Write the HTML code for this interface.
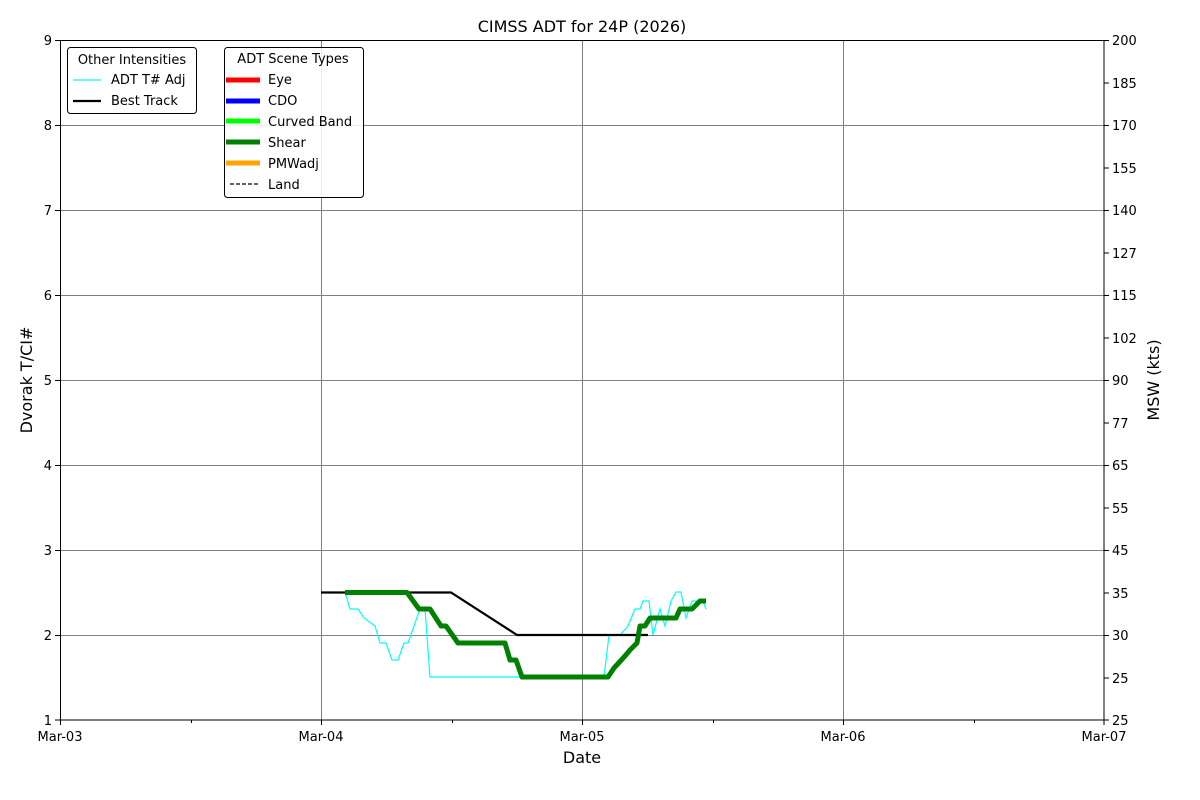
<!DOCTYPE html>
<html><head><meta charset="utf-8"><style>html,body{margin:0;padding:0;background:#fff}svg{display:block}text{font-family:"DejaVu Sans","Liberation Sans",sans-serif;fill:#000}</style></head><body>
<svg width="1200" height="800" viewBox="0 0 1200 800" xmlns="http://www.w3.org/2000/svg">
<rect width="1200" height="800" fill="#fff"/>
<g stroke="#808080" stroke-width="1">
<line x1="321.5" y1="40" x2="321.5" y2="720"/><line x1="582.5" y1="40" x2="582.5" y2="720"/><line x1="843.5" y1="40" x2="843.5" y2="720"/>
<line x1="60" y1="125.5" x2="1104" y2="125.5"/><line x1="60" y1="210.5" x2="1104" y2="210.5"/><line x1="60" y1="295.5" x2="1104" y2="295.5"/><line x1="60" y1="380.5" x2="1104" y2="380.5"/><line x1="60" y1="465.5" x2="1104" y2="465.5"/><line x1="60" y1="550.5" x2="1104" y2="550.5"/><line x1="60" y1="635.5" x2="1104" y2="635.5"/>
</g>
<polyline fill="none" stroke="#00ffff" stroke-width="1.2" points="345,592 350,609 358,609 364,618 375,626 380,643 386,643 392,660 398,660 404,643 408,643 420,609 425,609 430,677 604,677 609,635 620,635 628,626 635,609 640,609 643,601 649,601 653,635 660,609 665,626 671,601 676,592 681,592 686,618 692,601 697,601 703,601 706,609"/>
<polyline fill="none" stroke="#000" stroke-width="2.2" points="321,592.5 451,592.5 517,635 648,635"/>
<polyline fill="none" stroke="#008000" stroke-width="5" stroke-linejoin="round" points="345,592.5 407,592.5 419,609 430,609 441,626 446,626 458,643 505,643 510,660 516,660 522,677 608,677 614,668 625,656 630,650 637,643 640,626 645,626 650,618 676,618 680,609 692,609 700,601 706,601"/>
<rect x="60.5" y="40.5" width="1043.5" height="679.5" fill="none" stroke="#000" stroke-width="1"/>
<g stroke="#000" stroke-width="1">
<line x1="60.5" y1="720" x2="60.5" y2="725"/><line x1="321.5" y1="720" x2="321.5" y2="725"/><line x1="582.5" y1="720" x2="582.5" y2="725"/><line x1="843.5" y1="720" x2="843.5" y2="725"/><line x1="1104" y1="720" x2="1104" y2="725"/>
<line x1="191.5" y1="720" x2="191.5" y2="723"/><line x1="452.5" y1="720" x2="452.5" y2="723"/><line x1="713.5" y1="720" x2="713.5" y2="723"/><line x1="974.5" y1="720" x2="974.5" y2="723"/>
</g>
<g stroke="#000" stroke-width="1" id="lt">
<line x1="55" y1="40.5" x2="60" y2="40.5"/><line x1="55" y1="125.5" x2="60" y2="125.5"/><line x1="55" y1="210.5" x2="60" y2="210.5"/><line x1="55" y1="295.5" x2="60" y2="295.5"/><line x1="55" y1="380.5" x2="60" y2="380.5"/><line x1="55" y1="465.5" x2="60" y2="465.5"/><line x1="55" y1="550.5" x2="60" y2="550.5"/><line x1="55" y1="635.5" x2="60" y2="635.5"/><line x1="55" y1="720" x2="60" y2="720"/>
</g>
<g stroke="#000" stroke-width="1">
<line x1="1104" y1="40.5" x2="1109" y2="40.5"/><line x1="1104" y1="83" x2="1109" y2="83"/><line x1="1104" y1="125.5" x2="1109" y2="125.5"/><line x1="1104" y1="168" x2="1109" y2="168"/><line x1="1104" y1="210.5" x2="1109" y2="210.5"/><line x1="1104" y1="253" x2="1109" y2="253"/><line x1="1104" y1="295.5" x2="1109" y2="295.5"/><line x1="1104" y1="338" x2="1109" y2="338"/><line x1="1104" y1="380.5" x2="1109" y2="380.5"/><line x1="1104" y1="423" x2="1109" y2="423"/><line x1="1104" y1="465.5" x2="1109" y2="465.5"/><line x1="1104" y1="508" x2="1109" y2="508"/><line x1="1104" y1="550.5" x2="1109" y2="550.5"/><line x1="1104" y1="593" x2="1109" y2="593"/><line x1="1104" y1="635.5" x2="1109" y2="635.5"/><line x1="1104" y1="678" x2="1109" y2="678"/><line x1="1104" y1="720" x2="1109" y2="720"/>
</g>
<g font-size="13" text-anchor="end">
<text x="52" y="45">9</text><text x="52" y="130">8</text><text x="52" y="215">7</text><text x="52" y="300">6</text><text x="52" y="385">5</text><text x="52" y="470">4</text><text x="52" y="555">3</text><text x="52" y="640">2</text><text x="52" y="725">1</text>
</g>
<g font-size="13" text-anchor="start">
<text x="1112" y="45">200</text><text x="1112" y="88">185</text><text x="1112" y="130">170</text><text x="1112" y="173">155</text><text x="1112" y="215">140</text><text x="1112" y="258">127</text><text x="1112" y="300">115</text><text x="1112" y="343">102</text><text x="1112" y="385">90</text><text x="1112" y="428">77</text><text x="1112" y="470">65</text><text x="1112" y="513">55</text><text x="1112" y="555">45</text><text x="1112" y="598">35</text><text x="1112" y="640">30</text><text x="1112" y="683">25</text><text x="1112" y="725">25</text>
</g>
<g font-size="13" text-anchor="middle">
<text x="60" y="741">Mar-03</text><text x="321" y="741">Mar-04</text><text x="582" y="741">Mar-05</text><text x="843" y="741">Mar-06</text><text x="1104" y="741">Mar-07</text>
</g>
<text x="582" y="32" font-size="16" text-anchor="middle">CIMSS ADT for 24P (2026)</text>
<text x="582" y="763" font-size="16" text-anchor="middle">Date</text>
<text transform="translate(32,380) rotate(-90)" font-size="16" text-anchor="middle">Dvorak T/CI#</text>
<text transform="translate(1159,380) rotate(-90)" font-size="16" text-anchor="middle">MSW (kts)</text>
<rect x="67.5" y="47.5" width="129" height="66" rx="3" fill="#fff" fill-opacity="0.85" stroke="#000" stroke-width="1"/>
<text x="132" y="64" font-size="13" text-anchor="middle">Other Intensities</text>
<line x1="73" y1="80" x2="101" y2="80" stroke="#00ffff" stroke-width="1.2"/>
<text x="111" y="84" font-size="13">ADT T# Adj</text>
<line x1="73" y1="101" x2="101" y2="101" stroke="#000" stroke-width="2.2"/>
<text x="111" y="105" font-size="13">Best Track</text>
<rect x="224.5" y="47.5" width="139" height="150" rx="3" fill="#fff" fill-opacity="0.85" stroke="#000" stroke-width="1"/>
<text x="293" y="63" font-size="13" text-anchor="middle">ADT Scene Types</text>
<line x1="226" y1="80" x2="260" y2="80" stroke="#ff0000" stroke-width="5"/><text x="268" y="84" font-size="13">Eye</text>
<line x1="226" y1="101" x2="260" y2="101" stroke="#0000ff" stroke-width="5"/><text x="268" y="105" font-size="13">CDO</text>
<line x1="226" y1="121" x2="260" y2="121" stroke="#00ff00" stroke-width="5"/><text x="268" y="126" font-size="13">Curved Band</text>
<line x1="226" y1="142" x2="260" y2="142" stroke="#008000" stroke-width="5"/><text x="268" y="147" font-size="13">Shear</text>
<line x1="226" y1="163" x2="260" y2="163" stroke="#ffa500" stroke-width="5"/><text x="268" y="168" font-size="13">PMWadj</text>
<line x1="230" y1="184" x2="258" y2="184" stroke="#000" stroke-width="1.2" stroke-dasharray="4,2"/><text x="268" y="189" font-size="13">Land</text>
</svg>
</body></html>
